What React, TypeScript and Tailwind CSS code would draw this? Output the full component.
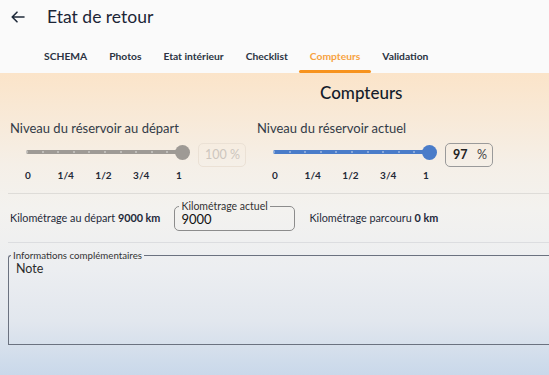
import React from "react";

const tabs = ["SCHEMA", "Photos", "Etat intérieur", "Checklist", "Compteurs", "Validation"];
const marks = ["0", "1/4", "1/2", "3/4", "1"];

function Slider({ color, value }: { color: string; value: number }) {
  const ticks = [0, 1, 2, 3, 4, 5, 6, 7, 8, 9, 10];
  return (
    <div className="w-[156px] shrink-0">
      <div className="relative h-[14px]">
        <div
          className="absolute left-0 right-0 top-[5px] h-[4px] rounded-full"
          style={{ backgroundColor: color }}
        />
        {ticks.map((t) => (
          <div
            key={t}
            className="absolute top-[6px] w-[2px] h-[2px] rounded-full bg-white/45"
            style={{ left: `${t * 10}%` }}
          />
        ))}
        <div
          className="absolute top-0 w-[15px] h-[15px] rounded-full -ml-[7px]"
          style={{ left: `${value}%`, backgroundColor: color }}
        />
      </div>
      <div className="relative h-[14px] mt-[9px] mx-[2px] mr-[3px] text-[10px] font-bold text-[#1f2937]">
        {marks.map((m, i) => (
          <span
            key={m}
            className="absolute top-0 -translate-x-1/2"
            style={{ left: `${i * 25}%` }}
          >
            {m}
          </span>
        ))}
      </div>
    </div>
  );
}

function PercentBox({ value, disabled }: { value: string; disabled?: boolean }) {
  return (
    <div
      className={
        disabled
          ? "w-[48px] h-[24px] rounded-[5px] border border-[#ebe1d5] flex items-center justify-between pl-[6px] pr-[5px] text-[12.5px] text-[#cdc6be]"
          : "w-[48px] h-[24px] rounded-[5px] border border-[#9a9a9a] flex items-center justify-between pl-[7px] pr-[5px] text-[12.5px] text-[#444]"
      }
    >
      <span className={disabled ? "" : "font-bold text-[#222]"}>{value}</span>
      <span>%</span>
    </div>
  );
}

export default function App() {
  return (
    <div
      className="w-[549px] h-[375px] overflow-hidden flex flex-col text-[#1f2a3a]"
      style={{ fontFamily: "Lato, 'Noto Sans', sans-serif" }}
    >
      <header className="bg-[#fafafa] h-[73px] flex flex-col shrink-0">
        <div className="flex items-center h-[34px] pl-[11px]">
          <svg width="14" height="12" viewBox="0 0 14 12" fill="none" stroke="#1f2a3a" strokeWidth="1.6" strokeLinecap="round" strokeLinejoin="round">
            <path d="M13 6H1.5M6 1.2L1.2 6L6 10.8" />
          </svg>
          <h1 className="ml-[22px] text-[17.5px] font-normal text-[#1c2536]">Etat de retour</h1>
        </div>
        <nav className="flex pl-[33px] mt-[14px]">
          {tabs.map((t) => (
            <div key={t} className="flex flex-col items-center">
              <span
                className={
                  t === "Compteurs"
                    ? "px-[11px] text-[10.3px] font-bold text-[#f7a23f] leading-[16px]"
                    : "px-[11px] text-[10.3px] font-bold text-[#2a3342] leading-[16px]"
                }
              >
                {t}
              </span>
              <div
                className={
                  t === "Compteurs"
                    ? "mt-[6px] h-[3px] w-full rounded-full bg-[#f7931e]"
                    : "mt-[6px] h-[3px] w-full"
                }
              />
            </div>
          ))}
        </nav>
      </header>

      <main className="flex-1 flex flex-col bg-[linear-gradient(180deg,#fbe4c9_0%,#f5efe7_30%,#f3f2ef_45%,#eceef1_65%,#e2e7ee_82%,#c9d8ea_100%)]">
        <h2 className="text-[17px] font-medium text-[#141c2b] pl-[320px] mt-[10px] leading-[20px]">Compteurs</h2>

        <div className="flex mt-[17px]">
          <div className="w-[257px] pl-[10px]">
            <p className="text-[13px] text-[#333b47] leading-[16px]">Niveau du réservoir au départ</p>
            <div className="flex items-start gap-[16px] mt-[9px] pl-[16px]">
              <Slider color="#9e9a95" value={100} />
              <div className="mt-[-2px]">
                <PercentBox value="100" disabled />
              </div>
            </div>
          </div>
          <div className="flex-1">
            <p className="text-[13px] text-[#333b47] leading-[16px]">Niveau du réservoir actuel</p>
            <div className="flex items-start gap-[16px] mt-[9px] pl-[16px]">
              <Slider color="#4a7cc9" value={100} />
              <div className="mt-[-2px]">
                <PercentBox value="97" />
              </div>
            </div>
          </div>
        </div>

        <div className="ml-[8px] mt-[11px] h-[1px] bg-[#dedcd8]" />

        <div className="flex items-center h-[48px] pl-[10px]">
          <span className="text-[10.8px] text-[#1f2a3a]">
            Kilométrage au départ <b className="font-bold">9000 km</b>
          </span>
          <fieldset className="ml-[14px] w-[121px] h-[29px] mt-[-4px] border border-[#8c8c8c] rounded-[5px] px-[6px] pb-[2px]">
            <legend className="text-[10.5px] px-[2px] ml-[-2px] leading-[9px] text-[#333]">Kilométrage actuel</legend>
            <div className="text-[13px] leading-[16px] text-[#111]">9000</div>
          </fieldset>
          <span className="ml-[14px] text-[10.8px] text-[#1f2a3a]">
            Kilométrage parcouru <b className="font-bold">0 km</b>
          </span>
        </div>

        <div className="ml-[8px] h-[1px] bg-[#dcdde0]" />

        <fieldset className="ml-[8px] mt-[8px] mr-[-4px] h-[94px] border border-[#6b7280] border-r-0 rounded-tl-[3px] px-[7px]">
          <legend className="text-[9.7px] px-[2px] ml-[-5px] leading-[9px] text-[#333]">Informations complémentaires</legend>
          <div className="text-[12.5px] leading-[15px] mt-[1px] text-[#2b2b2b]">Note</div>
        </fieldset>
      </main>
    </div>
  );
}
